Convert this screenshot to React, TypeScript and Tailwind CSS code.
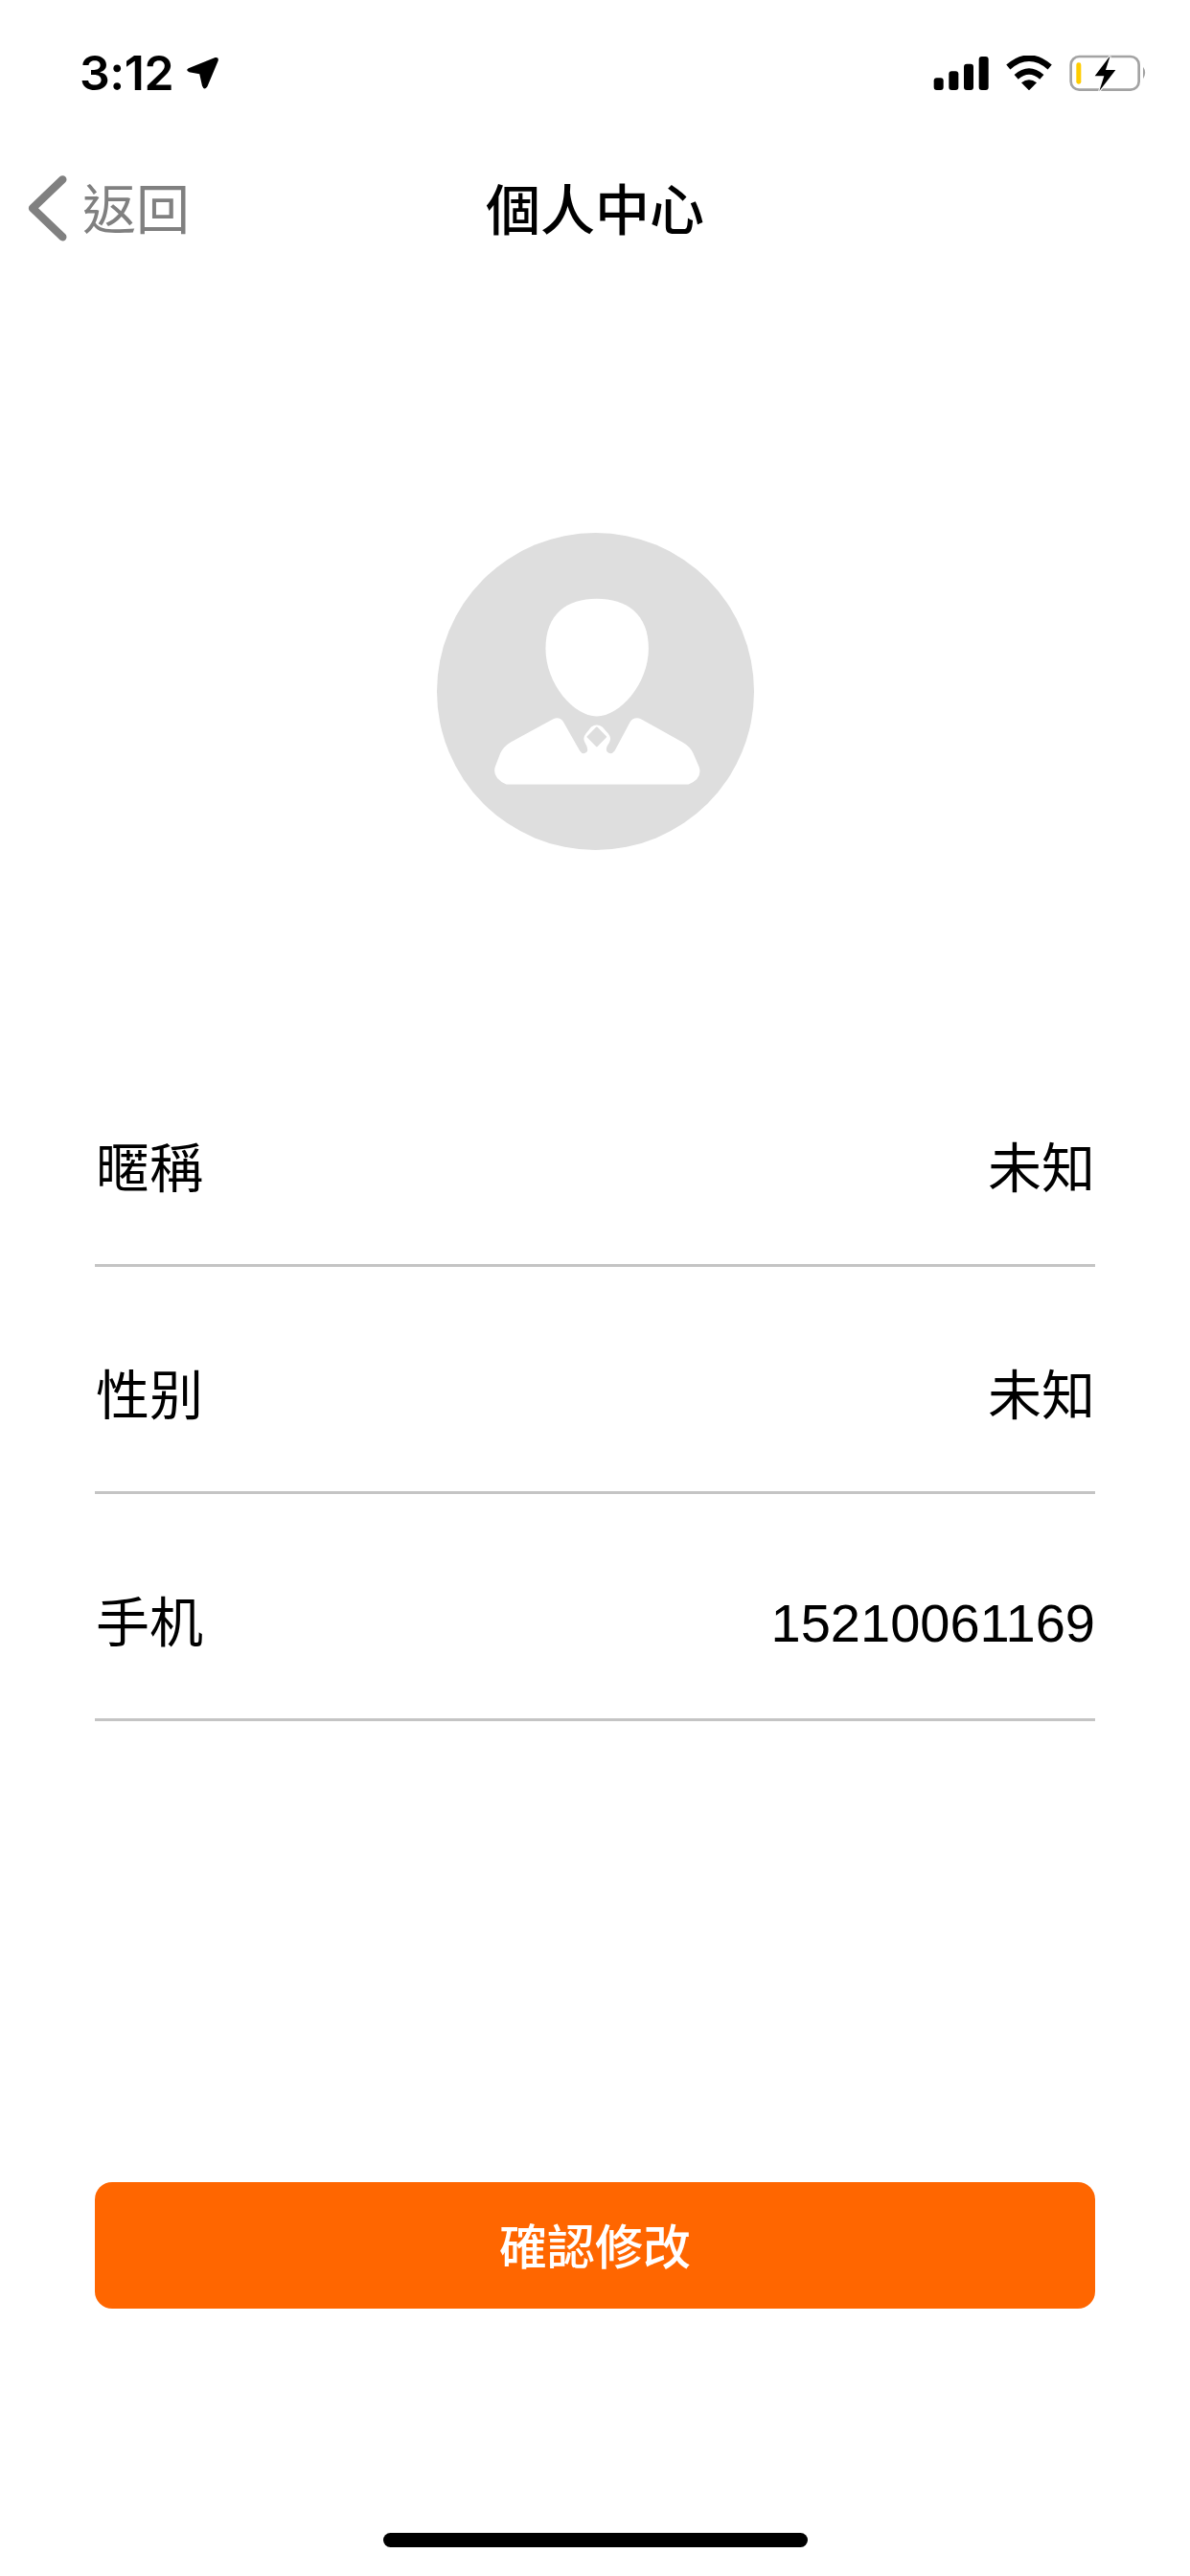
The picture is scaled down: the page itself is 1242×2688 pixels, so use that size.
const fontStack = "font-['Liberation_Sans','Noto_Sans_CJK_TC',sans-serif]";

function StatusIcons() {
  return (
    <div className="flex items-center">
      {/* signal bars */}
      <svg width="60" height="36" viewBox="125 82 180 108">
        <rect x="130" y="152" width="30" height="38" rx="9" fill="#000" />
        <rect x="177" y="131" width="30" height="59" rx="9" fill="#000" />
        <rect x="224" y="108" width="30" height="82" rx="9" fill="#000" />
        <rect x="271" y="85" width="30" height="105" rx="9" fill="#000" />
      </svg>
      {/* wifi */}
      <svg width="50" height="36" viewBox="350 82 150 108" className="ml-[16px]">
        <path d="M360 118 Q425 62 490 118" fill="none" stroke="#000" strokeWidth="19" />
        <path d="M385 149 Q425 114 465 149" fill="none" stroke="#000" strokeWidth="19" />
        <path d="M425 191 L401 167 Q425 148 449 167 Z" fill="#000" />
      </svg>
      {/* battery, charging */}
      <svg width="82" height="38" viewBox="550 80 246 114" className="ml-[17px]">
        <rect x="555" y="86" width="213" height="104" rx="26" fill="none" stroke="#a3a3a3" strokeWidth="8" />
        <rect x="572" y="105" width="15" height="67" rx="7" fill="#ffcc00" />
        <path d="M678 84 L630 147 L659 147 L644 194 L695 128 L664 128 Z" fill="#000" stroke="#fff" strokeWidth="7" paintOrder="stroke" />
        <path d="M781 118 Q794 135 781 156 Z" fill="#a3a3a3" />
      </svg>
    </div>
  );
}

function Avatar() {
  return (
    <svg width="331" height="331" viewBox="48 48 992 992">
      <circle cx="544" cy="544" r="496" fill="#dedede" />
      <path
        d="M548 254 C640 254 710 300 710 410 C710 520 620 622 548 622 C476 622 388 520 388 410 C388 300 456 254 548 254 Z"
        fill="#fff"
      />
      <path
        d="M412 630 Q432 622 444 640 L495 730 Q505 745 518 732 Q522 722 512 706 Q502 690 514 676 L530 656 Q548 642 566 656 L584 676 Q596 690 586 706 Q574 722 580 732 Q592 745 604 730 L652 640 Q664 622 686 630 L815 702 Q840 716 850 738 L868 780 Q880 815 835 835 L265 835 Q220 815 230 780 L246 738 Q256 716 280 702 Z"
        fill="#fff"
      />
      <path d="M548 658 L576 686 L548 714 L520 686 Z" fill="#dedede" stroke="#dedede" strokeWidth="6" strokeLinejoin="round" />
    </svg>
  );
}

function Row({ label, value }: { label: string; value: string }) {
  return (
    <div className="flex h-[237px] items-center justify-between border-b-[3px] border-[#c4c4c4] pt-[36px] pl-[1px] text-[56px] leading-none text-black">
      <span>{label}</span>
      <span>{value}</span>
    </div>
  );
}

export default function App() {
  return (
    <div className={`flex h-[2688px] w-[1242px] flex-col bg-white ${fontStack}`}>
      {/* status bar */}
      <div className="flex h-[158px] items-start justify-between pt-[46px] pr-[44px] pl-[83px]">
        <div className="flex items-center">
          <span className="font-['Inter',sans-serif] text-[50px] leading-[60px] font-semibold tracking-[-0.5px] text-black">
            3:12
          </span>
          <svg width="34" height="34" viewBox="585 86 100 100" className="ml-[14px]">
            <path d="M590 122 L672 89 Q684 87 681 99 L648 178 Q638 192 632 176 L624 140 L592 134 Q580 128 590 122 Z" fill="#000" />
          </svg>
        </div>
        <div className="pt-[11px]">
          <StatusIcons />
        </div>
      </div>

      {/* nav bar */}
      <div className="grid h-[120px] grid-cols-3 items-center">
        <div className="flex items-center pl-[28px]">
          <svg width="44" height="72" viewBox="84 460 132 216">
            <path d="M196 476 L102 566 L196 656" fill="none" stroke="#808080" strokeWidth="25" strokeLinecap="round" strokeLinejoin="round" />
          </svg>
          <span className="ml-[14px] pt-[4px] text-[56px] leading-none text-[#808080]">返回</span>
        </div>
        <div className="pt-[4px] text-center text-[57px] leading-none font-medium whitespace-nowrap text-black">個人中心</div>
      </div>

      <div className="mt-[278px] flex justify-center">
        <Avatar />
      </div>

      {/* profile fields */}
      <div className="mt-[198px] ml-[99px] w-[1044px]">
        <Row label="暱稱" value="未知" />
        <Row label="性别" value="未知" />
        <Row label="手机" value="15210061169" />
      </div>

      <button className="mt-[481px] ml-[99px] flex h-[132px] w-[1044px] items-center justify-center rounded-[18px] bg-[#ff6600] pt-[6px] text-[50px] leading-none font-medium text-white">
        確認修改
      </button>

      {/* home indicator */}
      <div className="mt-[234px] ml-[400px] h-[15px] w-[443px] rounded-full bg-black" />
    </div>
  );
}
